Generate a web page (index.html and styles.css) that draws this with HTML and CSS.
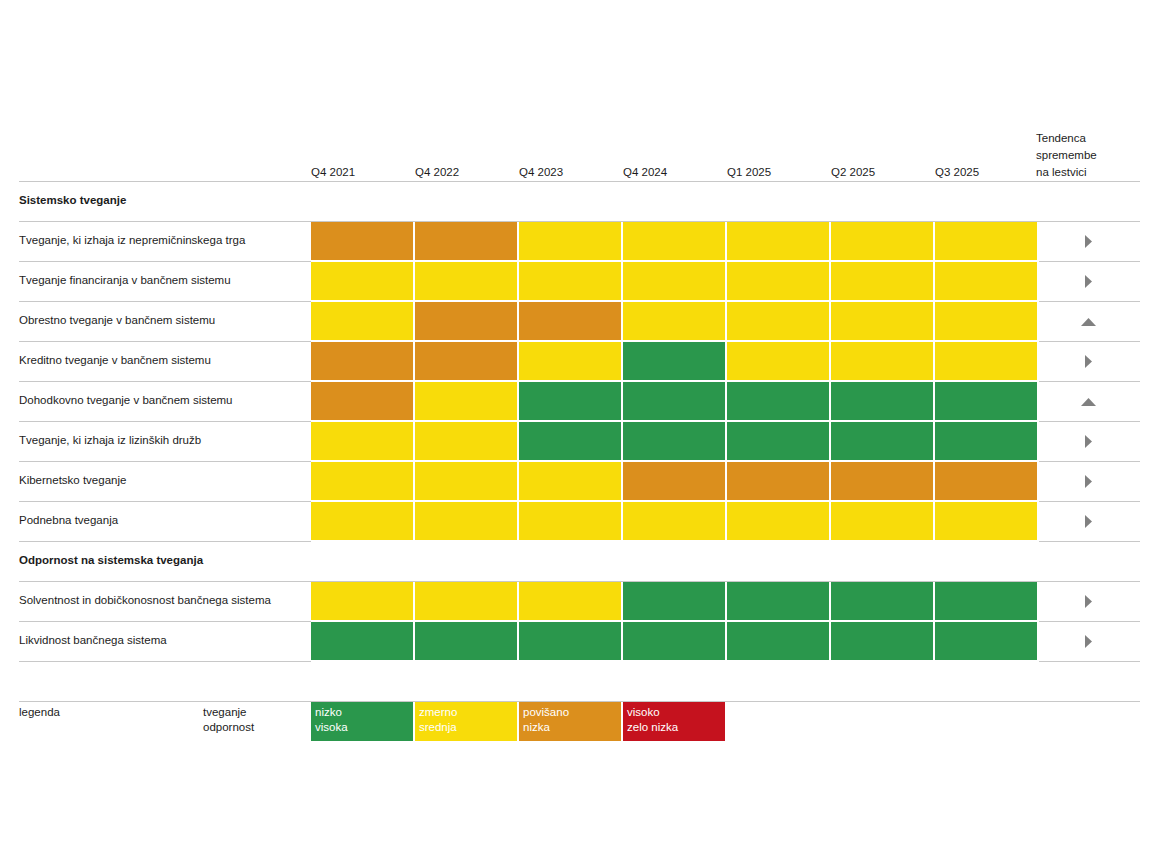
FILE: index.html
```html
<!DOCTYPE html>
<html lang="sl">
<head>
<meta charset="utf-8">
<title>Tveganja</title>
<link rel="stylesheet" href="styles.css">
</head>
<body>
<div class="chart">
  <div class="row head">
    <div class="lbl"></div>
    <div class="hc">Q4 2021</div>
    <div class="hc">Q4 2022</div>
    <div class="hc">Q4 2023</div>
    <div class="hc">Q4 2024</div>
    <div class="hc">Q1 2025</div>
    <div class="hc">Q2 2025</div>
    <div class="hc">Q3 2025</div>
    <div class="hc tend-h">Tendenca<br>spremembe<br>na lestvici</div>
  </div>

  <div class="row section"><div class="lbl">Sistemsko tveganje</div></div>

  <div class="row">
    <div class="lbl">Tveganje, ki izhaja iz nepremičninskega trga</div>
    <div class="c o"></div><div class="c o"></div><div class="c y"></div><div class="c y"></div><div class="c y"></div><div class="c y"></div><div class="c y"></div>
    <div class="tend"><svg class="ar" width="7" height="13" viewBox="0 0 7 13"><polygon points="0,0 7,6.5 0,13"/></svg></div>
  </div>
  <div class="row">
    <div class="lbl">Tveganje financiranja v bančnem sistemu</div>
    <div class="c y"></div><div class="c y"></div><div class="c y"></div><div class="c y"></div><div class="c y"></div><div class="c y"></div><div class="c y"></div>
    <div class="tend"><svg class="ar" width="7" height="13" viewBox="0 0 7 13"><polygon points="0,0 7,6.5 0,13"/></svg></div>
  </div>
  <div class="row">
    <div class="lbl">Obrestno tveganje v bančnem sistemu</div>
    <div class="c y"></div><div class="c o"></div><div class="c o"></div><div class="c y"></div><div class="c y"></div><div class="c y"></div><div class="c y"></div>
    <div class="tend"><svg class="ar up" width="15" height="8" viewBox="0 0 15 8"><polygon points="0,8 7.5,0 15,8"/></svg></div>
  </div>
  <div class="row">
    <div class="lbl">Kreditno tveganje v bančnem sistemu</div>
    <div class="c o"></div><div class="c o"></div><div class="c y"></div><div class="c g"></div><div class="c y"></div><div class="c y"></div><div class="c y"></div>
    <div class="tend"><svg class="ar" width="7" height="13" viewBox="0 0 7 13"><polygon points="0,0 7,6.5 0,13"/></svg></div>
  </div>
  <div class="row">
    <div class="lbl">Dohodkovno tveganje v bančnem sistemu</div>
    <div class="c o"></div><div class="c y"></div><div class="c g"></div><div class="c g"></div><div class="c g"></div><div class="c g"></div><div class="c g"></div>
    <div class="tend"><svg class="ar up" width="15" height="8" viewBox="0 0 15 8"><polygon points="0,8 7.5,0 15,8"/></svg></div>
  </div>
  <div class="row">
    <div class="lbl">Tveganje, ki izhaja iz lizinških družb</div>
    <div class="c y"></div><div class="c y"></div><div class="c g"></div><div class="c g"></div><div class="c g"></div><div class="c g"></div><div class="c g"></div>
    <div class="tend"><svg class="ar" width="7" height="13" viewBox="0 0 7 13"><polygon points="0,0 7,6.5 0,13"/></svg></div>
  </div>
  <div class="row">
    <div class="lbl">Kibernetsko tveganje</div>
    <div class="c y"></div><div class="c y"></div><div class="c y"></div><div class="c o"></div><div class="c o"></div><div class="c o"></div><div class="c o"></div>
    <div class="tend"><svg class="ar" width="7" height="13" viewBox="0 0 7 13"><polygon points="0,0 7,6.5 0,13"/></svg></div>
  </div>
  <div class="row">
    <div class="lbl">Podnebna tveganja</div>
    <div class="c y"></div><div class="c y"></div><div class="c y"></div><div class="c y"></div><div class="c y"></div><div class="c y"></div><div class="c y"></div>
    <div class="tend"><svg class="ar" width="7" height="13" viewBox="0 0 7 13"><polygon points="0,0 7,6.5 0,13"/></svg></div>
  </div>

  <div class="row section"><div class="lbl">Odpornost na sistemska tveganja</div></div>

  <div class="row">
    <div class="lbl">Solventnost in dobičkonosnost bančnega sistema</div>
    <div class="c y"></div><div class="c y"></div><div class="c y"></div><div class="c g"></div><div class="c g"></div><div class="c g"></div><div class="c g"></div>
    <div class="tend"><svg class="ar" width="7" height="13" viewBox="0 0 7 13"><polygon points="0,0 7,6.5 0,13"/></svg></div>
  </div>
  <div class="row">
    <div class="lbl">Likvidnost bančnega sistema</div>
    <div class="c g"></div><div class="c g"></div><div class="c g"></div><div class="c g"></div><div class="c g"></div><div class="c g"></div><div class="c g"></div>
    <div class="tend"><svg class="ar" width="7" height="13" viewBox="0 0 7 13"><polygon points="0,0 7,6.5 0,13"/></svg></div>
  </div>

  <div class="legend">
    <div class="lg-title">legenda</div>
    <div class="lg-kind">tveganje<br>odpornost</div>
    <div class="lc g">nizko<br>visoka</div>
    <div class="lc y">zmerno<br>srednja</div>
    <div class="lc o">povišano<br>nizka</div>
    <div class="lc r">visoko<br>zelo nizka</div>
  </div>
</div>
</body>
</html>
```
FILE: styles.css
```css
* { box-sizing: border-box; }
html, body { margin: 0; padding: 0; background: #fff; }
body {
  font-family: "Liberation Sans", Arial, sans-serif;
  font-size: 11.5px;
  color: #1c1c1c;
}
.chart {
  width: 1121px;
  margin: 130px 0 0 19px;
}
.row {
  display: grid;
  grid-template-columns: 292px repeat(7, 104px) 101px;
  height: 40px;
}
.row .lbl {
  display: flex;
  align-items: center;
  height: 40px;
  padding-bottom: 3px;
  border-bottom: 1px solid #c8c8c8;
  white-space: nowrap;
}
.row .c {
  height: 38px;
  margin-right: 2px;
}
.row .tend {
  display: flex;
  align-items: center;
  justify-content: center;
  height: 40px;
  border-bottom: 1px solid #c8c8c8;
  padding-right: 2px;
}
.ar polygon { fill: #808080; }
.ar { display: block; }

.row.head {
  height: 52px;
  border-bottom: 1px solid #c8c8c8;
  align-items: end;
}
.row.head .lbl { border-bottom: none; height: auto; padding-bottom: 0; }
.hc {
  line-height: 17px;
  white-space: nowrap;
  padding-bottom: 0;
}
.tend-h { margin-left: -3px; }

.row.section {
  display: flex;
  border-bottom: 1px solid #c8c8c8;
}
.row.section .lbl {
  border-bottom: none;
  height: 39px;
  font-weight: bold;
  padding-bottom: 4px;
}

.o { background: #db8f1d; }
.y { background: #f8dc0a; }
.g { background: #2a974c; }
.r { background: #c5121e; }

.legend {
  margin-top: 39px;
  border-top: 1px solid #c8c8c8;
  display: grid;
  grid-template-columns: 184px 108px repeat(4, 104px);
  height: 40px;
  line-height: 15px;
}
.lg-title, .lg-kind { padding-top: 3px; }
.lc {
  height: 39px;
  margin-right: 2px;
  color: #fff;
  padding: 3px 0 0 4px;
}
```
